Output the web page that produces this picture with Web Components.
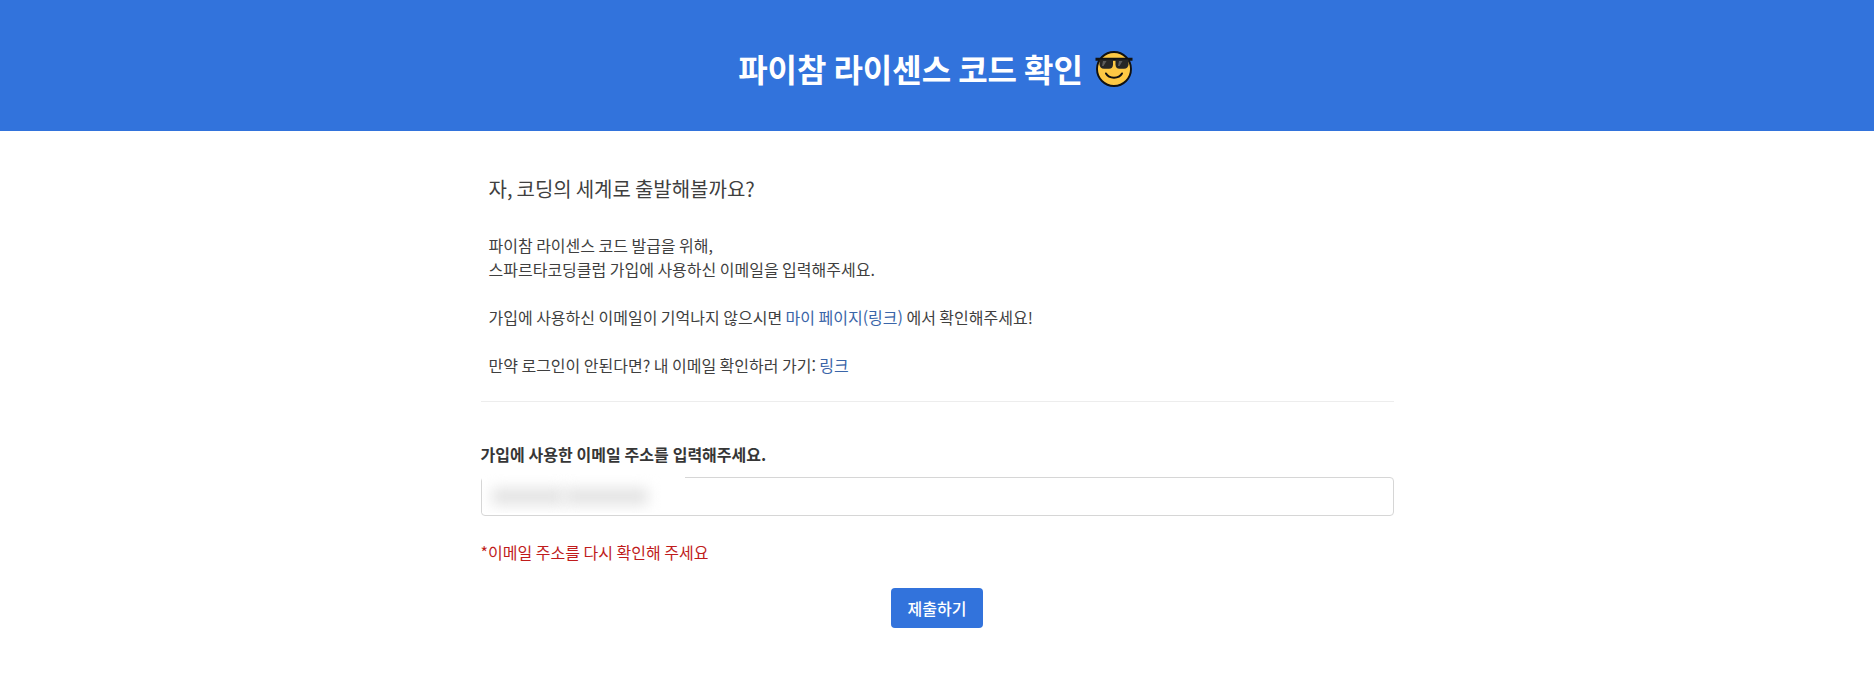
<!DOCTYPE html>
<html lang="ko">
<head>
<meta charset="utf-8">
<title>파이참 라이센스 코드 확인</title>
<style>
  html, body {
    margin: 0;
    background: #fff;
    color: #3f3f3f;
    font-family: "Noto Sans CJK KR", "Noto Sans", sans-serif;
    font-size: 16px;
    line-height: 1.5;
  }
</style>
</head>
<body>
<license-header>파이참 라이센스 코드 확인</license-header>
<license-page>
  <intro-panel>
    <span slot="title">자, 코딩의 세계로 출발해볼까요?</span>
    파이참 라이센스 코드 발급을 위해,<br>
    스파르타코딩클럽 가입에 사용하신 이메일을 입력해주세요.<br><br>
    가입에 사용하신 이메일이 기억나지 않으시면 <a href="#" style="color:#3a65a8;text-decoration:none">마이 페이지(링크)</a> 에서 확인해주세요!<br><br>
    만약 로그인이 안된다면? 내 이메일 확인하러 가기: <a href="#" style="color:#3a65a8;text-decoration:none">링크</a>
  </intro-panel>
  <email-form>
    <span slot="label">가입에 사용한 이메일 주소를 입력해주세요.</span>
    <span slot="error">*이메일 주소를 다시 확인해 주세요</span>
    <span slot="submit">제출하기</span>
  </email-form>
</license-page>

<script>
  const headerTemplate = document.createElement("template");
  headerTemplate.innerHTML = `
    <style>
      :host {
        display: block;
        background-color: #3273dc;
      }
      header {
        height: 131px;
        padding-top: 5px;
        box-sizing: border-box;
        display: flex;
        align-items: center;
        justify-content: center;
        gap: 13px;
      }
      h1 {
        margin: 0;
        color: #fff;
        font-size: 32px;
        font-weight: 700;
        line-height: 48px;
        word-spacing: -2px;
      }
      svg {
        width: 36px;
        height: 36px;
        margin-right: 4px;
        margin-top: 2px;
        overflow: visible;
      }
    </style>
    <header>
      <h1><slot></slot></h1>
      <svg viewBox="0 0 36 36" aria-hidden="true">
        <circle cx="18" cy="18" r="17" fill="#fdc844" stroke="#111" stroke-width="1.9"/>
        <path d="M-.5 6.800H36.500V9.800H-.5z" fill="#111"/>
        <path d="M3.500 8.500H17V13.500C17 16.300 15.500 17.800 13 17.800H8C5.300 17.800 3.500 15.800 3.500 13.200Z" fill="#262626"/>
        <path d="M19.500 8.500H32.500V13.200C32.500 15.800 30.700 17.800 28 17.800H23.500C21 17.800 19.500 16.300 19.500 13.500Z" fill="#262626"/>
        <path d="M7 10H10.500L7.500 15H6ZM23 10H26.500L23.500 15H22Z" fill="#5c5c5c"/>
        <path d="M10 22.500C13 28 23 28 26 22.500" fill="none" stroke="#111" stroke-width="2" stroke-linecap="round"/>
      </svg>
    </header>
  `;

  class LicenseHeader extends HTMLElement {
    constructor() {
      super();
      this.attachShadow({mode: "open"});
      this.shadowRoot.appendChild(headerTemplate.content.cloneNode(true));
    }
  }

  const pageTemplate = document.createElement("template");
  pageTemplate.innerHTML = `
    <style>
      :host {
        display: block;
        width: 913px;
        margin: 0 auto;
      }
    </style>
    <slot></slot>
  `;

  class LicensePage extends HTMLElement {
    constructor() {
      super();
      this.attachShadow({mode: "open"});
      this.shadowRoot.appendChild(pageTemplate.content.cloneNode(true));
    }
  }

  const introTemplate = document.createElement("template");
  introTemplate.innerHTML = `
    <style>
      :host {
        display: block;
        padding: 43px 8px 24px;
        border-bottom: 1px solid #ededed;
        word-spacing: -1px;
      }
      h2 {
        margin: 0 0 29px;
        font-size: 20px;
        font-weight: 400;
        line-height: 30px;
        color: #3f3f3f;
        word-spacing: -1.6px;
      }
    </style>
    <h2><slot name="title"></slot></h2>
    <slot></slot>
  `;

  class IntroPanel extends HTMLElement {
    constructor() {
      super();
      this.attachShadow({mode: "open"});
      this.shadowRoot.appendChild(introTemplate.content.cloneNode(true));
    }
  }

  const formTemplate = document.createElement("template");
  formTemplate.innerHTML = `
    <style>
      :host {
        display: block;
        padding-top: 40px;
      }
      label {
        display: block;
        color: #363636;
        font-weight: 700;
        margin-bottom: 11px;
        word-spacing: -.6px;
      }
      .field {
        position: relative;
        height: 39px;
        box-sizing: border-box;
        border: 1px solid #d6d6d6;
        border-radius: 4px;
        background: #fff;
      }
      /* the address in the screenshot is blurred out */
      .smudge {
        position: absolute;
        left: 0;
        top: -5px;
        width: 203px;
        height: 40px;
        background: #fff;
        overflow: hidden;
      }
      .smudge i {
        position: absolute;
        top: 15px;
        height: 17px;
        background: #e3e3e3;
        filter: blur(7px);
      }
      .error {
        color: #c01c1c;
        margin-top: 24px;
        word-spacing: -.9px;
      }
      .actions {
        display: flex;
        justify-content: center;
        margin-top: 24px;
      }
      button {
        width: 92px;
        height: 40px;
        border: 0;
        border-radius: 4px;
        background: #3273dc;
        color: #fff;
        font: 500 16px/24px "Noto Sans CJK KR", "Noto Sans", sans-serif;
        padding: 0;
      }
    </style>
    <label><slot name="label"></slot></label>
    <div class="field">
      <div class="smudge">
        <i style="left:10px;width:72px"></i>
        <i style="left:82px;width:84px"></i>
      </div>
    </div>
    <div class="error"><slot name="error"></slot></div>
    <div class="actions"><button type="button"><slot name="submit"></slot></button></div>
  `;

  class EmailForm extends HTMLElement {
    constructor() {
      super();
      this.attachShadow({mode: "open"});
      this.shadowRoot.appendChild(formTemplate.content.cloneNode(true));
    }
  }

  customElements.define("license-header", LicenseHeader);
  customElements.define("license-page", LicensePage);
  customElements.define("intro-panel", IntroPanel);
  customElements.define("email-form", EmailForm);
</script>
</body>
</html>
